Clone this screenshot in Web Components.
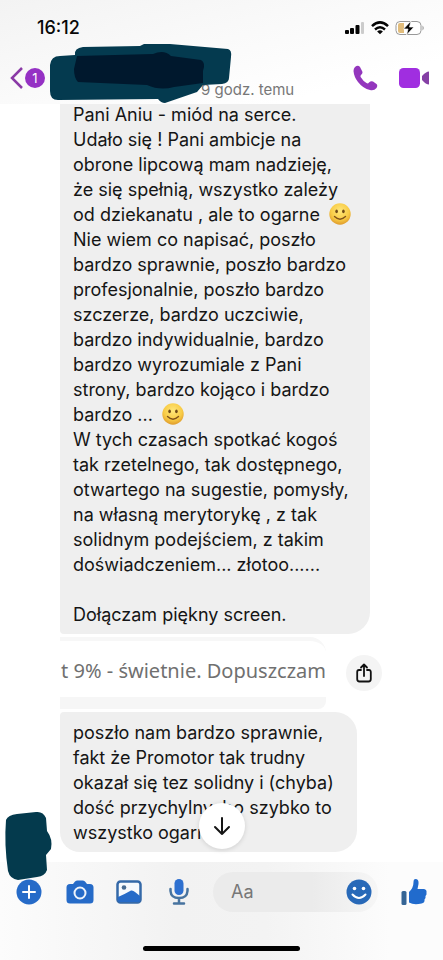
<!DOCTYPE html>
<html lang="pl">
<head>
<meta charset="utf-8">
<meta name="viewport" content="width=device-width, initial-scale=1">
<title>Czat</title>
<style>
html, body { margin: 0; }
body { background: #fff; color: #151515; font-family: Inter, "Liberation Sans", sans-serif; }
</style>
</head>
<body>
<chat-app></chat-app>

<template id="t-app">
<style>
:host { display: flex; flex-direction: column; min-height: 100vh; position: relative; overflow: hidden; }
main { flex: 1; display: flex; flex-direction: column; align-items: flex-start; gap: 3px; padding: 0 24px 8px 60px; margin-top: -2px; }
header { position: relative; z-index: 1; background: linear-gradient(165deg, #f3f3f3, #fafafa 45%, #fff 80%); }
.tint { position: absolute; left: 4px; top: 811px; z-index: 2; }
</style>
<header><status-bar></status-bar><chat-nav></chat-nav></header>
<main>
<chat-bubble continued>Pani Aniu - miód na serce.<br>Udało się ! Pani ambicje na<br>obrone lipcową mam nadzieję,<br>że się spełnią, wszystko zależy<br>od dziekanatu , ale to ogarne <smile-face></smile-face><br>Nie wiem co napisać, poszło<br>bardzo sprawnie, poszło bardzo<br>profesjonalnie, poszło bardzo<br>szczerze, bardzo uczciwie,<br>bardzo indywidualnie, bardzo<br>bardzo wyrozumiale z Pani<br>strony, bardzo kojąco i bardzo<br>bardzo ... <smile-face></smile-face><br>W tych czasach spotkać kogoś<br>tak rzetelnego, tak dostępnego,<br>otwartego na sugestie, pomysły,<br>na własną merytorykę , z tak<br>solidnym podejściem, z takim<br>doświadczeniem... złotoo......<br><br>Dołączam piękny screen.</chat-bubble>
<shared-shot>t 9% - świetnie. Dopuszczam</shared-shot>
<chat-bubble>poszło nam bardzo sprawnie,<br>fakt że Promotor tak trudny<br>okazał się tez solidny i (chyba)<br>dość przychylny, bo szybko to<br>wszystko ogarnął<scroll-down slot="over"></scroll-down></chat-bubble>
</main>
<svg class="tint" width="50" height="70" viewBox="0 0 50 70" aria-hidden="true"><path d="M2 9Q4 4 13 3L32 1Q39 0 42 7L43 20Q49 28 47 38L42 44L43 59Q41 65 33 66L14 69Q6 68 4 60Q0 33 2 9Z" fill="#043a4d"/></svg>
<chat-composer></chat-composer>
</template>

<template id="t-status">
<style>
:host { display: flex; align-items: center; justify-content: space-between; height: 56px; padding: 0 18px 0 37px; color: #080808; }
time { font-size: 18px; font-weight: 500; line-height: 24px; }
.icons { display: flex; align-items: center; gap: 6px; }
svg { display: block; }
</style>
<time>16:12</time>
<div class="icons">
<svg width="20" height="14" viewBox="0 0 20 14"><g fill="#050505"><rect x="0" y="9" width="4" height="4" rx="1"/><rect x="5" y="7" width="4" height="6" rx="1"/><rect x="10.500" y="4" width="4" height="9" rx="1"/></g><rect x="16" y="1" width="3" height="12" rx="1" fill="#ccc"/></svg>
<svg width="18" height="14" viewBox="0 0 18 14" fill="none" stroke="#050505" stroke-width="2.500"><path d="M1 5.200Q9-2.400 17 5.200M4 8.500Q9 4.100 14 8.500"/><path d="M9 13.200 6.100 10.400Q9 8.300 11.900 10.400Z" fill="#050505" stroke="none"/></svg>
<svg width="30" height="16" viewBox="0 0 30 16"><rect x="1" y="1.500" width="25" height="13" rx="4" fill="#fff" stroke="#999"/><path d="M5 3H9V13H5Q3 13 3 11V5Q3 3 5 3Z" fill="#e2bd7c"/><path d="M27.500 5.500Q30 8 27.500 10.500Z" fill="#999"/><path d="M16 1 8.500 9H13L11.500 15 19 7H14.500Z" fill="#050505" stroke="#fff" stroke-width=".7"/></svg>
</div>
</template>

<template id="t-nav">
<style>
:host { display: flex; align-items: center; height: 48px; padding: 0 13px 0 10px; position: relative; }
button { border: 0; padding: 0; background: none; display: flex; align-items: center; cursor: pointer; font: inherit; }
.back { gap: 2px; margin-top: -4px; }
.count { width: 20px; height: 20px; border-radius: 50%; background: #9531c4; color: #fff; font-size: 13px; line-height: 20px; text-align: center; }
p { margin: 0 auto 0 156px; align-self: flex-end; color: #777; font-size: 15px; line-height: 24px; padding-bottom: 2px; }
.calls { display: flex; gap: 21px; align-items: center; margin-top: -4px; }
svg { display: block; }
.paint { position: absolute; left: 48px; top: -14px; }
</style>
<button class="back" aria-label="Wstecz"><svg width="13" height="22" viewBox="0 0 13 22"><path d="M12 1 2 11 12 21" fill="none" stroke="#8a3aa6" stroke-width="2.500"/></svg><span class="count">1</span></button>
<p>9 godz. temu</p>
<div class="calls">
<button aria-label="Zadzwoń"><svg width="25" height="26" viewBox="0 0 25 26"><path d="M2 2Q5-.5 7 2L9.300 6.500Q10 8.500 8 10Q7 11 8 12.500Q10 16 13.500 18Q15 19 16 17.500Q18 15.500 20 16.500L23.500 19Q25 20.500 23.500 23Q21 26 17 25Q10 23.500 5 17Q1 12 .5 6Q.5 3.500 2 2Z" fill="#9336bd"/></svg></button>
<button aria-label="Rozmowa wideo"><svg width="31" height="20" viewBox="0 0 31 20"><rect width="21" height="20" rx="4.500" fill="#a02ee0"/><path d="M23 8Q27 3.500 30 3.500V16.500Q27 16.500 23 12Z" fill="#8540a5"/></svg></button>
</div>
<svg class="paint" width="186" height="64" viewBox="0 0 186 64" aria-hidden="true"><path d="M2 23Q3 14 12 14L27 13Q26 6 35 5L92 4 96 2 122 2 180 7Q184 8 183 15L181 36Q181 41 174 42L155 43 149 50 117 61Q113 61 110 57L10 58Q2 58 2 49Z" fill="#043a4f"/><path d="M29 14 105 12Q116 7 123 14L153 18Q158 21 155 29L155 41 126 45Q112 49 99 43L30 40Q26 36 26 27Z" fill="#00182d"/></svg>
</template>

<template id="t-bubble">
<style>
:host { display: block; position: relative; width: fit-content; background: #efefef; border-radius: 4px 22px 22px 20px; padding: 8px 23px 7px 13px; font-size: 18px; line-height: 25px; white-space: nowrap; }
:host([continued]) { padding: 0 19px 7px 13px; border-radius: 0 0 22px 4px; }
</style>
<slot></slot><slot name="over"></slot>
</template>

<template id="t-smile">
<style>
:host { display: inline-block; vertical-align: middle; height: 22px; margin: -4px 0 0 4px; }
svg { display: block; }
</style>
<svg width="22" height="22" viewBox="0 0 22 22"><defs><radialGradient id="g" cx=".5" cy=".35" r=".65"><stop offset="0" stop-color="#ffe77a"/><stop offset=".65" stop-color="#f8cb45"/><stop offset="1" stop-color="#df9b2c"/></radialGradient></defs><circle cx="11" cy="11" r="10.700" fill="url(#g)"/><ellipse cx="7.600" cy="8.300" rx="1.300" ry="1.900" fill="#704a16"/><ellipse cx="14.400" cy="8.300" rx="1.300" ry="1.900" fill="#704a16"/><path d="M5.500 13.500Q11 18.800 16.500 13.500" fill="none" stroke="#80521a" stroke-width="1.400" stroke-linecap="round"/></svg>
</template>

<template id="t-shot">
<style>
:host { display: flex; align-items: center; gap: 20px; }
figure { margin: 0; width: 266px; padding: 17px 0 13px; border-top: 4px solid #f7f7f7; border-bottom: 12px solid #f6f6f6; border-radius: 0 16px 8px 0; background: #fff; color: #707070; font-family: "Noto Sans", sans-serif; font-size: 20px; line-height: 26px; white-space: nowrap; display: flex; justify-content: flex-end; }
button { width: 36px; height: 36px; border: 0; border-radius: 50%; padding: 0; background: #f4f4f4; display: grid; place-items: center; cursor: pointer; }
</style>
<figure><slot></slot></figure>
<button aria-label="Udostępnij"><svg width="16" height="20" viewBox="0 0 16 20" fill="none" stroke="#111" stroke-width="1.800" stroke-linecap="round" stroke-linejoin="round"><path d="M5 7H3Q1.200 7 1.200 9V16Q1.200 18.500 3.500 18.500H12.500Q14.800 18.500 14.800 16V9Q14.800 7 13 7H11M8 13V1.500M5 4.500 8 1.500 11 4.500"/></svg></button>
</template>

<template id="t-down">
<style>
:host { position: absolute; left: 139px; bottom: 3px; }
button { width: 46px; height: 46px; border: 0; border-radius: 50%; padding: 0; background: #fff; box-shadow: 0 1px 5px #0002; display: grid; place-items: center; cursor: pointer; }
</style>
<button aria-label="Przewiń w dół"><svg width="18" height="20" viewBox="0 0 18 20" fill="none" stroke="#151515" stroke-width="2" stroke-linecap="round" stroke-linejoin="round"><path d="M9 2V18M2 11 9 18 16 11"/></svg></button>
</template>

<template id="t-composer">
<style>
:host { display: flex; flex-direction: column; height: 98px; box-sizing: border-box; padding-top: 10px; background: linear-gradient(90deg, #fcfcfc, #f2f2f2 40%, #f3f3f3 60%, #fcfcfc 88%); }
form { display: flex; align-items: center; padding: 0 16px 0 16px; height: 40px; }
button { border: 0; padding: 0; background: none; display: grid; place-items: center; cursor: pointer; }
.tool { width: 26px; height: 28px; margin-right: 24px; }
label { flex: 1; min-width: 0; display: flex; align-items: center; height: 40px; box-sizing: border-box; padding: 0 6px 0 18px; border-radius: 20px; background: linear-gradient(90deg, #ebebeb 60%, #f6f6f6); margin: 0 23px 0 -3px; }
input { flex: 1; min-width: 0; border: 0; padding: 0; outline: 0; background: none; font: 18px/24px Inter, "Liberation Sans", sans-serif; color: #222; }
input::placeholder { color: #777; opacity: 1; }
.home { width: 157px; height: 5px; border-radius: 3px; background: #000; margin: auto auto 9px; }
svg { display: block; }
</style>
<form onsubmit="return false">
<button type="button" class="tool" aria-label="Więcej"><svg width="26" height="26" viewBox="0 0 26 26"><circle cx="13" cy="13" r="12.500" fill="#266bc8"/><path d="M13 7V19M7 13H19" stroke="#fff" stroke-width="2" stroke-linecap="round"/></svg></button>
<button type="button" class="tool" aria-label="Aparat"><svg width="28" height="24" viewBox="0 0 28 24"><path d="M4 4H7L9 1.500Q10 .5 11.500 .5H16.500Q18 .5 19 1.500L21 4H24Q27.500 4 27.500 7.500V20Q27.500 23.500 24 23.500H4Q.5 23.500 .5 20V7.500Q.5 4 4 4Z" fill="#266bc8"/><circle cx="14" cy="13" r="5.500" fill="none" stroke="#eef4fb" stroke-width="2"/></svg></button>
<button type="button" class="tool" aria-label="Zdjęcia"><svg width="26" height="24" viewBox="0 0 26 24"><rect x="1.500" y="1.500" width="23" height="21" rx="3" fill="#f7fafd" stroke="#3569a8" stroke-width="2.500"/><circle cx="8" cy="7.500" r="2.300" fill="#486b91"/><path d="M2 17 8.500 14 15 10.500Q17 10 19 12L24 16V21Q24 22 22 22H4Q2 22 2 20Z" fill="#266bc8"/></svg></button>
<button type="button" class="tool" aria-label="Nagraj głos"><svg width="20" height="26" viewBox="0 0 20 26"><rect x="5.500" y="0" width="9" height="16" rx="4.500" fill="#2e70d0"/><path d="M1.500 10V12Q2 19 10 19Q18 19 18.500 12V10M10 19V24M5 24.500H15" fill="none" stroke="#47739f" stroke-width="2.500" stroke-linecap="round"/></svg></button>
<label><input type="text" placeholder="Aa" aria-label="Wiadomość"><button type="button" aria-label="Emotikony"><svg width="26" height="26" viewBox="0 0 26 26"><circle cx="13" cy="13" r="12.500" fill="#2869b8"/><circle cx="8.500" cy="9.500" r="1.800" fill="#fff"/><circle cx="17.500" cy="9.500" r="1.800" fill="#fff"/><path d="M6.500 15.500Q13 22.500 19.500 15.500" fill="none" stroke="#fff" stroke-width="2" stroke-linecap="round"/></svg></button></label>
<button type="button" aria-label="Lubię to"><svg width="26" height="28" viewBox="0 0 26 28"><rect x=".5" y="13" width="5" height="14" rx="1.500" fill="#356595"/><path d="M8 14Q12.500 10 12.500 4Q12.500 1 14.500 1Q18 1 17.500 6L16.500 11H23Q26 11.500 25.500 14.500Q26 16.500 24.500 18Q25 20 23.500 21.500Q24 25 20.500 25.500Q13 27.500 8 24.500Z" fill="#216bcd"/></svg></button>
</form>
<div class="home"></div>
</template>

<script>
const parts = {
  'status-bar': 't-status',
  'chat-nav': 't-nav',
  'smile-face': 't-smile',
  'scroll-down': 't-down',
  'chat-bubble': 't-bubble',
  'shared-shot': 't-shot',
  'chat-composer': 't-composer',
  'chat-app': 't-app'
};
for (const [name, id] of Object.entries(parts)) {
  customElements.define(name, class extends HTMLElement {
    constructor() {
      super();
      this.attachShadow({ mode: 'open' }).append(document.getElementById(id).content.cloneNode(true));
    }
  });
}
</script>
</body>
</html>
